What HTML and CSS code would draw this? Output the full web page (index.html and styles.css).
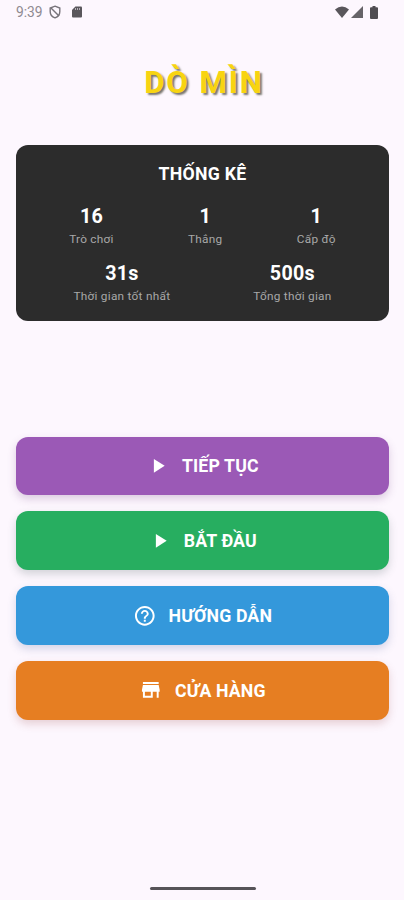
FILE: index.html
```
<!DOCTYPE html>
<html lang="vi">
<head>
<meta charset="utf-8">
<meta name="viewport" content="width=device-width, initial-scale=1">
<title>Dò Mìn</title>
<link rel="stylesheet" href="styles.css">
</head>
<body>
<div class="screen">
  <header class="status">
    <div class="status-left">
      <span class="clock">9:39</span>
      <svg class="shield" viewBox="0 0 12 14"><path d="M6 1.2 10.8 3v3.700c0 2.900-2 5.100-4.800 6.100C3.200 11.800 1.200 9.600 1.200 6.700V3z" fill="none" stroke="#77737a" stroke-width="1.400"/><path d="M2 3l8 8" stroke="#77737a" stroke-width="1.500"/></svg>
      <svg class="sd" viewBox="0 0 10 12"><path d="M3.400.5H9q1 0 1 1v9q0 1-1 1H1q-1 0-1-1V4z" fill="#59565b"/><path d="M3.500 2v2M5.500 2v2M7.500 2v2" stroke="#b5b0b7" stroke-width="1"/></svg>
    </div>
    <div class="status-right">
      <svg class="wifi" viewBox="0 0 14 12"><path d="M0 3.500Q7-2.500 14 3.500L7 12z" fill="#59565b"/></svg>
      <svg class="signal" viewBox="0 0 12 12"><path d="M12 0v12H0z" fill="#666368"/></svg>
      <svg class="battery" viewBox="0 0 8 13"><path d="M2.500 0h3v1.300H7q1 0 1 1V12q0 1-1 1H1q-1 0-1-1V2.300q0-1 1-1h1.500z" fill="#504d52"/></svg>
    </div>
  </header>
  <h1 class="title">DÒ MÌN</h1>
  <section class="stats">
    <h2 class="stats-title">THỐNG KÊ</h2>
    <div class="stats-row">
      <div class="stat"><b>16</b><span>Trò chơi</span></div>
      <div class="stat"><b>1</b><span>Thắng</span></div>
      <div class="stat"><b>1</b><span>Cấp độ</span></div>
    </div>
    <div class="stats-row">
      <div class="stat"><b>31s</b><span>Thời gian tốt nhất</span></div>
      <div class="stat"><b>500s</b><span>Tổng thời gian</span></div>
    </div>
  </section>
  <nav class="menu">
    <button class="btn purple"><svg viewBox="0 0 24 24"><path d="M8 5v14l11-7z"/></svg><span>TIẾP TỤC</span></button>
    <button class="btn green"><svg viewBox="0 0 24 24"><path d="M8 5v14l11-7z"/></svg><span>BẮT ĐẦU</span></button>
    <button class="btn blue"><svg viewBox="0 0 24 24"><path d="M11 18h2v-2h-2v2zm1-16C6.480 2 2 6.480 2 12s4.480 10 10 10 10-4.480 10-10S17.520 2 12 2zm0 18c-4.410 0-8-3.590-8-8s3.590-8 8-8 8 3.590 8 8-3.590 8-8 8zm0-14c-2.210 0-4 1.790-4 4h2c0-1.100.9-2 2-2s2 .9 2 2c0 2-3 1.750-3 5h2c0-2.250 3-2.500 3-5 0-2.210-1.790-4-4-4z"/></svg><span>HƯỚNG DẪN</span></button>
    <button class="btn orange"><svg viewBox="0 0 24 24"><path d="M20 4H4v2h16V4zm1 10v-2l-1-5H4l-1 5v2h1v6h10v-6h4v6h2v-6h1zm-9 4H6v-4h6v4z"/></svg><span>CỬA HÀNG</span></button>
  </nav>
  <div class="home-bar"></div>
</div>
</body>
</html>
```
FILE: styles.css
```
* { box-sizing: border-box; }
body {
  margin: 0;
  background: #fdf7fe;
  font-family: Roboto, "Noto Sans", sans-serif;
}
.screen {
  display: flex;
  flex-direction: column;
  height: 900px;
  padding: 0 15px 0 16px;
  overflow: hidden;
}
.status {
  display: flex;
  justify-content: space-between;
  height: 24px;
  padding-right: 11px;
}
.status-left, .status-right { display: flex; align-items: center; }
.clock { font-size: 13.800px; line-height: 24px; color: #8f8a91; }
.shield { width: 12px; height: 14px; margin-left: 6px; }
.sd { width: 10px; height: 12px; margin-left: 11px; }
.wifi { width: 14px; height: 12px; }
.signal { width: 12px; height: 12px; margin-left: 2px; }
.battery { width: 8px; height: 13px; margin-left: 7px; }
.title {
  margin: 40px 0 0;
  height: 37px;
  padding-left: 3px;
  line-height: 38px;
  font-size: 31.300px;
  font-weight: 700;
  letter-spacing: 1.900px;
  text-align: center;
  color: #f8d411;
  text-shadow: 2px 2px 2px #77746c;
}
.stats {
  margin-top: 43.500px;
  height: 176.500px;
  padding: 16px;
  border-radius: 12px;
  background: #2c2c2c;
  color: #fff;
}
.stats-title {
  margin: 3px 0 18px;
  line-height: 21px;
  font-size: 17.700px;
  font-weight: 700;
  letter-spacing: 0.250px;
  text-align: center;
}
.stats-row { display: flex; justify-content: space-around; height: 57px; }
.stat { display: flex; flex-direction: column; align-items: center; }
.stat b { padding-top: 2px; font-size: 19.700px; line-height: 23px; letter-spacing: 0.250px; }
.stat span { margin-top: 4px; font-size: 11.800px; line-height: 14px; letter-spacing: 0.270px; color: #a8a8a8; }
.menu { display: flex; flex-direction: column; gap: 16px; margin-top: 115.500px; }
.btn {
  display: flex;
  align-items: center;
  justify-content: center;
  gap: 12px;
  height: 58.800px;
  padding: 0;
  border: 0;
  border-radius: 12px;
  color: #fff;
  font: 700 17.700px/21px Roboto, "Noto Sans", sans-serif;
  letter-spacing: 0.150px;
}
.btn span { padding-top: 2px; }
.btn svg { width: 23.600px; height: 23.600px; fill: #fff; }
.purple { background: #9b59b6; box-shadow: 0 4px 8px rgba(100, 50, 120, 0.22); }
.green { background: #27ae60; box-shadow: 0 4px 8px rgba(60, 80, 80, 0.22); }
.blue { background: #3498db; box-shadow: 0 4px 8px rgba(70, 90, 150, 0.22); }
.orange { background: #e67e22; box-shadow: 0 4px 8px rgba(150, 70, 70, 0.22); }
.home-bar {
  width: 106px;
  height: 3px;
  margin: auto auto 10px 134px;
  border-radius: 1.500px;
  background: #565358;
}
```
